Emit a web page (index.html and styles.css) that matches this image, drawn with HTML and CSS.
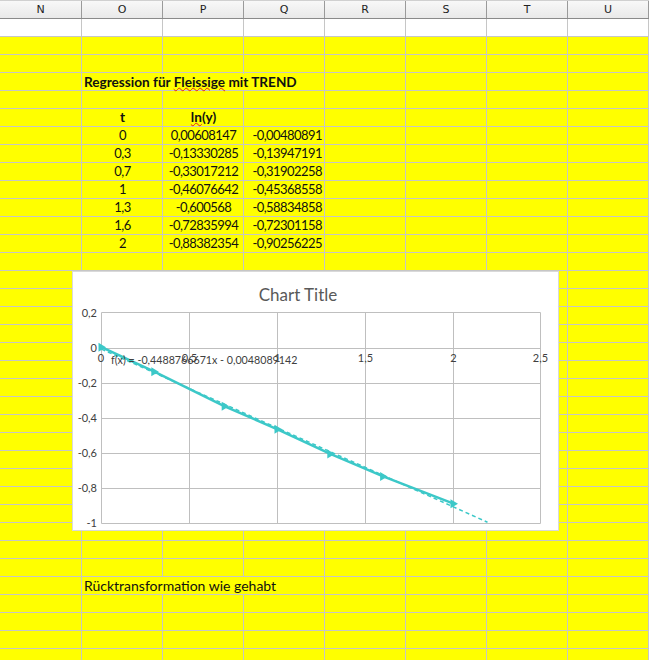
FILE: index.html
```html
<!DOCTYPE html>
<html lang="de">
<head>
<meta charset="utf-8">
<title>Regression</title>
<link rel="stylesheet" href="styles.css">
</head>
<body>
<div class="sheet">
  <div class="colhead">
    <div>N</div><div>O</div><div>P</div><div>Q</div><div>R</div><div>S</div><div>T</div><div>U</div>
  </div>
  <div class="row white"></div>
  <div class="row"></div>
  <div class="row"></div>
  <div class="row"><div class="cell o text"><span class="over bold">Regression für <span class="spell">Fleissige</span> mit TREND</span></div></div>
  <div class="row"></div>
  <div class="row"><div class="cell o center bold">t</div><div class="cell p center bold"><span class="spell">ln</span>(y)</div></div>
  <div class="row"><div class="cell o center num">0</div><div class="cell p center num">0,00608147</div><div class="cell q right num">-0,00480891</div></div>
  <div class="row"><div class="cell o center num">0,3</div><div class="cell p center num">-0,13330285</div><div class="cell q right num">-0,13947191</div></div>
  <div class="row"><div class="cell o center num">0,7</div><div class="cell p center num">-0,33017212</div><div class="cell q right num">-0,31902258</div></div>
  <div class="row"><div class="cell o center num">1</div><div class="cell p center num">-0,46076642</div><div class="cell q right num">-0,45368558</div></div>
  <div class="row"><div class="cell o center num">1,3</div><div class="cell p center num">-0,600568</div><div class="cell q right num">-0,58834858</div></div>
  <div class="row"><div class="cell o center num">1,6</div><div class="cell p center num">-0,72835994</div><div class="cell q right num">-0,72301158</div></div>
  <div class="row"><div class="cell o center num">2</div><div class="cell p center num">-0,88382354</div><div class="cell q right num">-0,90256225</div></div>
  <div class="row"></div><div class="row"></div><div class="row"></div>
  <div class="row"></div><div class="row"></div><div class="row"></div>
  <div class="row"></div><div class="row"></div><div class="row"></div>
  <div class="row"></div><div class="row"></div><div class="row"></div>
  <div class="row"></div><div class="row"></div><div class="row"></div>
  <div class="row"></div><div class="row"></div><div class="row"></div>
  <div class="row"><div class="cell o text"><span class="over">Rücktransformation wie gehabt</span></div></div>
  <div class="row"></div><div class="row"></div><div class="row"></div><div class="row"></div>
</div>

<div class="chart">
  <svg width="487" height="260" viewBox="72 271 487 260" xmlns="http://www.w3.org/2000/svg">
    <rect x="72.5" y="271.5" width="486" height="259" fill="#fff" stroke="#d9d9d9"/>
    <text class="title" x="298" y="301" text-anchor="middle">Chart Title</text>
    <g class="grid">
      <line x1="101.5" y1="312.5" x2="101.5" y2="523.5"/>
      <line x1="189.5" y1="312.5" x2="189.5" y2="523.5"/>
      <line x1="277.5" y1="312.5" x2="277.5" y2="523.5"/>
      <line x1="365.5" y1="312.5" x2="365.5" y2="523.5"/>
      <line x1="453.5" y1="312.5" x2="453.5" y2="523.5"/>
      <line x1="540.5" y1="312.5" x2="540.5" y2="523.5"/>
      <line x1="101.5" y1="312.5" x2="540.5" y2="312.5"/>
      <line x1="101.5" y1="348.5" x2="540.5" y2="348.5"/>
      <line x1="101.5" y1="383.5" x2="540.5" y2="383.5"/>
      <line x1="101.5" y1="418.5" x2="540.5" y2="418.5"/>
      <line x1="101.5" y1="453.5" x2="540.5" y2="453.5"/>
      <line x1="101.5" y1="488.5" x2="540.5" y2="488.5"/>
      <line x1="101.5" y1="523.5" x2="540.5" y2="523.5"/>
    </g>
    <g class="axis" text-anchor="end">
      <text x="97" y="317">0,2</text>
      <text x="97" y="352">0</text>
      <text x="97" y="387">-0,2</text>
      <text x="97" y="422">-0,4</text>
      <text x="97" y="457">-0,6</text>
      <text x="97" y="492">-0,8</text>
      <text x="97" y="527">-1</text>
    </g>
    <g class="axis" text-anchor="middle">
      <text x="101" y="362">0</text>
      <text x="189.5" y="362">0,5</text>
      <text x="277.5" y="362">1</text>
      <text x="365.5" y="362">1,5</text>
      <text x="453.5" y="362">2</text>
      <text x="540.5" y="362">2,5</text>
    </g>
    <path class="trend" d="M101.5 349.1 L487.5 522.2"/>
    <polyline class="series" points="101.5,347.2 154.3,371.7 224.7,406.3 277.5,429.3 330.3,453.9 383.1,476.4 453.5,503.7"/>
    <g class="markers">
      <polygon points="98.5,342.7 98.5,351.7 106,347.2"/>
      <polygon points="151.3,367.2 151.3,376.2 158.8,371.7"/>
      <polygon points="221.7,401.8 221.7,410.8 229.2,406.3"/>
      <polygon points="274.5,424.8 274.5,433.8 282,429.3"/>
      <polygon points="327.3,449.4 327.3,458.4 334.8,453.9"/>
      <polygon points="380.1,471.9 380.1,480.9 387.6,476.4"/>
      <polygon points="450.5,499.2 450.5,508.2 458,503.7"/>
    </g>
    <text class="axis eq" x="111" y="364">f(x) = -0,4488766671x - 0,0048089142</text>
  </svg>
</div>
</body>
</html>
```

FILE: styles.css
```css
html, body {
  margin: 0;
  padding: 0;
  background: #ffff00;
}

body {
  width: 649px;
  height: 660px;
  overflow: hidden;
  position: relative;
  font-family: Lato, "Open Sans", sans-serif;
  font-size: 13px;
  color: #111;
}

.sheet {
  display: flex;
  flex-direction: column;
}

.colhead {
  display: grid;
  grid-template-columns: 82px repeat(7, 81px);
  height: 19px;
  box-sizing: border-box;
  border-top: 1px solid #d0d0d0;
  border-bottom: 1px solid #8a8a8a;
  background: linear-gradient(#f8f8f8, #e9e9e9);
}

.colhead div {
  border-right: 1px solid #9a9a9a;
  text-align: center;
  font-family: "DejaVu Sans", sans-serif;
  font-size: 11px;
  line-height: 17px;
  color: #222;
}

.row {
  display: grid;
  grid-template-columns: 82px repeat(7, 81px);
  height: 18px;
  box-sizing: border-box;
  border-bottom: 1px solid #c6c6c6;
  background:
    repeating-linear-gradient(to right, #c6c6c6 0 1px, transparent 1px 81px) 81px 0 / 568px 100% no-repeat,
    #ffff00;
}

.row.white {
  background:
    repeating-linear-gradient(to right, #c6c6c6 0 1px, transparent 1px 81px) 81px 0 / 568px 100% no-repeat,
    #ffffff;
}

.cell {
  line-height: 17px;
  white-space: nowrap;
  padding: 0 2px;
}

.o { grid-column: 2; }
.p { grid-column: 3; }
.q { grid-column: 4; }

.center { text-align: center; }
.right { text-align: right; padding-right: 3px; }
.bold { font-weight: bold; font-size: 13.6px; }
.text { font-size: 14px; }
.num { letter-spacing: -0.55px; }

.over {
  background: #ffff00;
}

.spell {
  position: relative;
  z-index: 1;
  text-decoration: underline wavy #e02020;
  text-decoration-thickness: 1px;
  text-underline-offset: 0;
}

.chart {
  position: absolute;
  left: 72px;
  top: 271px;
  width: 487px;
  height: 260px;
}

.chart svg {
  display: block;
}

.title {
  font-family: Lato, sans-serif;
  font-size: 17px;
  fill: #595959;
}

.axis {
  font-family: Lato, sans-serif;
  font-size: 11px;
  fill: #404040;
}

.eq {
  font-size: 10.7px;
}

.grid line {
  stroke: #bfbfbf;
  stroke-width: 1;
}

.series {
  fill: none;
  stroke: #3cc8c8;
  stroke-width: 2.5;
  stroke-linejoin: round;
}

.trend {
  fill: none;
  stroke: #3cc8c8;
  stroke-width: 1.5;
  stroke-dasharray: 4 3;
}

.markers polygon {
  fill: #3cc8c8;
}
```
